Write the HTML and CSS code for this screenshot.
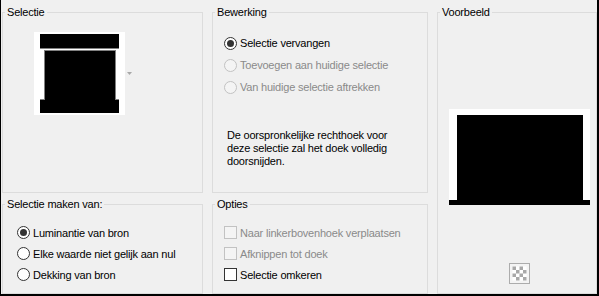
FILE: index.html
```html
<!DOCTYPE html>
<html lang="nl">
<head>
<meta charset="utf-8">
<title>Selectie</title>
<link rel="stylesheet" href="styles.css">
</head>
<body>
<div class="window">
  <fieldset class="group g-selectie">
    <legend>Selectie</legend>
    <div class="thumb-row">
      <svg class="thumb" width="91" height="83" viewBox="0 0 91 83">
        <rect width="91" height="83" fill="#fff"/>
        <rect x="6" y="2" width="79" height="14" fill="#000"/>
        <rect x="6" y="16" width="79" height="1" fill="#808080"/>
        <rect x="10" y="18" width="72" height="50" fill="#808080"/>
        <rect x="11" y="19" width="70" height="49" fill="#000"/>
        <rect x="6" y="67" width="5" height="1" fill="#808080"/>
        <rect x="81" y="67" width="4" height="1" fill="#808080"/>
        <rect x="6" y="68" width="79" height="13" fill="#000"/>
      </svg>
      <svg class="drop-arrow" width="5" height="3" viewBox="0 0 5 3">
        <polygon points="0,0 5,0 2.5,3" fill="#a8a8a8"/>
      </svg>
    </div>
  </fieldset>

  <fieldset class="group g-bewerking">
    <legend>Bewerking</legend>
    <div class="options">
      <label class="opt"><input type="radio" name="bew" checked><span>Selectie vervangen</span></label>
      <label class="opt disabled"><input type="radio" name="bew" disabled><span>Toevoegen aan huidige selectie</span></label>
      <label class="opt disabled"><input type="radio" name="bew" disabled><span>Van huidige selectie aftrekken</span></label>
    </div>
    <p class="note">De oorspronkelijke rechthoek voor deze selectie zal het doek volledig doorsnijden.</p>
  </fieldset>

  <fieldset class="group g-voorbeeld">
    <legend>Voorbeeld</legend>
    <svg class="preview" width="141" height="96" viewBox="0 0 141 96">
      <rect x="0" y="0" width="141" height="91" fill="#fff"/>
      <rect x="8" y="6" width="126" height="90" fill="#000"/>
      <rect x="0" y="91" width="141" height="5" fill="#000"/>
    </svg>
    <svg class="checker" width="21" height="21" viewBox="0 0 21 21">
      <rect x="0.5" y="0.5" width="20" height="20" fill="#f4f4f4" stroke="#acacac"/>
      <rect x="3.5" y="3.5" width="14" height="14" fill="#fff"/>
      <rect x="3.5" y="3.5" width="3.5" height="3.5" fill="#a8a8a8"/>
      <rect x="10.5" y="3.5" width="3.5" height="3.5" fill="#a8a8a8"/>
      <rect x="7" y="7" width="3.5" height="3.5" fill="#a8a8a8"/>
      <rect x="14" y="7" width="3.5" height="3.5" fill="#a8a8a8"/>
      <rect x="3.5" y="10.5" width="3.5" height="3.5" fill="#a8a8a8"/>
      <rect x="10.5" y="10.5" width="3.5" height="3.5" fill="#a8a8a8"/>
      <rect x="7" y="14" width="3.5" height="3.5" fill="#a8a8a8"/>
      <rect x="14" y="14" width="3.5" height="3.5" fill="#a8a8a8"/>
    </svg>
  </fieldset>

  <fieldset class="group g-maken">
    <legend>Selectie maken van:</legend>
    <div class="options compact">
      <label class="opt"><input type="radio" name="src" checked><span>Luminantie van bron</span></label>
      <label class="opt"><input type="radio" name="src"><span>Elke waarde niet gelijk aan nul</span></label>
      <label class="opt"><input type="radio" name="src"><span>Dekking van bron</span></label>
    </div>
  </fieldset>

  <fieldset class="group g-opties">
    <legend>Opties</legend>
    <div class="options compact">
      <label class="opt disabled"><input type="checkbox" disabled><span>Naar linkerbovenhoek verplaatsen</span></label>
      <label class="opt disabled"><input type="checkbox" disabled><span>Afknippen tot doek</span></label>
      <label class="opt"><input type="checkbox"><span>Selectie omkeren</span></label>
    </div>
  </fieldset>
</div>
</body>
</html>
```

FILE: styles.css
```css
html, body {
  margin: 0;
  padding: 0;
  background: #f0f0f0;
}

body {
  font-family: "Liberation Sans", Arial, sans-serif;
  font-size: 11px;
  letter-spacing: -0.2px;
  color: #000;
}

.window {
  box-sizing: border-box;
  width: 599px;
  height: 296px;
  border-left: 1px solid #000;
  border-right: 2px solid #000;
  border-bottom: 2px solid #000;
  padding: 6px 0 0 1px;
  display: grid;
  grid-template-columns: 201px 216px 160px;
  grid-template-rows: 187px 96px;
  column-gap: 9px;
  row-gap: 5px;
}

.group {
  box-sizing: border-box;
  margin: 0;
  padding: 0;
  min-width: 0;
  border: 1px solid #dcdcdc;
}

.group legend {
  margin-left: 2px;
  padding: 0 2px;
  line-height: 13px;
  font-size: 11px;
}

.g-selectie { grid-column: 1; grid-row: 1; }
.g-bewerking { grid-column: 2; grid-row: 1; }
.g-voorbeeld { grid-column: 3; grid-row: 1 / 3; }
.g-maken { grid-column: 1; grid-row: 2; }
.g-opties { grid-column: 2; grid-row: 2; }

.thumb-row {
  display: flex;
  align-items: center;
  gap: 2px;
  margin: 13px 0 0 31px;
}

.thumb, .drop-arrow, .preview, .checker {
  display: block;
}

.options {
  display: flex;
  flex-direction: column;
  padding: 13px 0 0 11px;
}

.opt {
  display: flex;
  align-items: center;
  height: 22px;
  gap: 3px;
  white-space: nowrap;
}

.options.compact .opt {
  height: 21px;
}

.g-maken .options {
  padding: 11px 0 0 14px;
}

.g-opties .options {
  padding: 11px 0 0 11px;
}

.opt.disabled {
  color: #8a8a8a;
}

.opt input {
  -webkit-appearance: none;
  appearance: none;
  box-sizing: border-box;
  margin: 0;
  width: 13px;
  height: 13px;
  background: #fff;
  border: 1px solid #333;
  flex: none;
}

.opt input[type="radio"] {
  border-radius: 50%;
  display: grid;
  place-items: center;
}

.opt input[type="radio"]:checked::before {
  content: "";
  width: 7px;
  height: 7px;
  border-radius: 50%;
  background: #333;
}

.opt input:disabled {
  border-color: #c2c2c2;
  background: #f4f4f4;
}

.note {
  margin: 31px 0 0 14px;
  width: 176px;
  line-height: 13px;
}

.preview {
  margin: 90px 0 0 11px;
}

.checker {
  margin: 58px 0 0 71px;
}
```
